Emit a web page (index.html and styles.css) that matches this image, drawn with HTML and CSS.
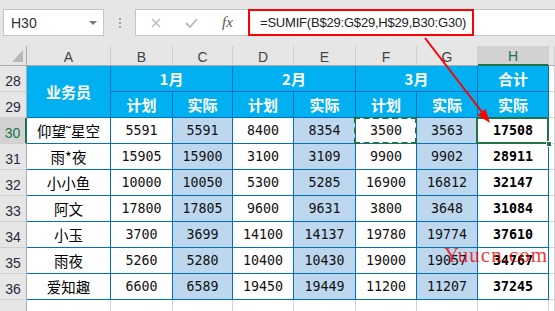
FILE: index.html
```html
<!DOCTYPE html>
<html lang="zh">
<head>
<meta charset="utf-8">
<title>SUMIF</title>
<link rel="stylesheet" href="styles.css">
</head>
<body>
<div class="app">
  <div class="toolbar">
    <div class="namebox"><span>H30</span><span class="caret"></span></div>
    <div class="grip"><i></i><i></i><i></i></div>
    <div class="fxbtns">
      <svg class="ic-x" width="10" height="10" viewBox="0 0 10 10"><path d="M1 1L9 9M9 1L1 9" stroke="#B9B9B9" stroke-width="1.4" fill="none"/></svg>
      <svg class="ic-ok" width="13" height="10" viewBox="0 0 13 10"><path d="M1 5L5 9L12 1" stroke="#B9B9B9" stroke-width="1.8" fill="none"/></svg>
      <span class="fx">fx</span>
    </div>
    <div class="formula">
      <div class="fbox">=SUMIF(B$29:G$29,H$29,B30:G30)</div>
      <div class="frest"></div>
    </div>
  </div>

  <div class="sheet">
    <div class="corner"><svg width="11" height="12" viewBox="0 0 11 12"><polygon points="11,0 11,12 0,12" fill="#B8B8B8"/></svg></div>
    <div class="ch">A</div><div class="ch">B</div><div class="ch">C</div><div class="ch">D</div>
    <div class="ch">E</div><div class="ch">F</div><div class="ch">G</div><div class="ch active">H</div><div class="ch"></div>

    <div class="rh">28</div>
    <div class="c h span2r">业务员</div>
    <div class="c h span2c">1月</div>
    <div class="c h span2c">2月</div>
    <div class="c h span2c">3月</div>
    <div class="c h">合计</div>
    <div class="g"></div>

    <div class="rh">29</div>
    <div class="c h">计划</div><div class="c h">实际</div>
    <div class="c h">计划</div><div class="c h">实际</div>
    <div class="c h">计划</div><div class="c h">实际</div>
    <div class="c h">实际</div>
    <div class="g"></div>

    <div class="rh active">30</div>
    <div class="c name">仰望˜星空</div>
    <div class="c n">5591</div><div class="c n s">5591</div>
    <div class="c n">8400</div><div class="c n s">8354</div>
    <div class="c n ants">3500</div><div class="c n s">3563</div>
    <div class="c n t sel">17508<span class="handle"></span></div>
    <div class="g"></div>

    <div class="rh">31</div>
    <div class="c name">雨*夜</div>
    <div class="c n">15905</div><div class="c n s">15900</div>
    <div class="c n">3100</div><div class="c n s">3109</div>
    <div class="c n">9900</div><div class="c n s">9902</div>
    <div class="c n t">28911</div>
    <div class="g"></div>

    <div class="rh">32</div>
    <div class="c name">小小鱼</div>
    <div class="c n">10000</div><div class="c n s">10050</div>
    <div class="c n">5300</div><div class="c n s">5285</div>
    <div class="c n">16900</div><div class="c n s">16812</div>
    <div class="c n t">32147</div>
    <div class="g"></div>

    <div class="rh">33</div>
    <div class="c name">阿文</div>
    <div class="c n">17800</div><div class="c n s">17805</div>
    <div class="c n">9600</div><div class="c n s">9631</div>
    <div class="c n">3800</div><div class="c n s">3648</div>
    <div class="c n t">31084</div>
    <div class="g"></div>

    <div class="rh">34</div>
    <div class="c name">小玉</div>
    <div class="c n">3700</div><div class="c n s">3699</div>
    <div class="c n">14100</div><div class="c n s">14137</div>
    <div class="c n">19780</div><div class="c n s">19774</div>
    <div class="c n t">37610</div>
    <div class="g"></div>

    <div class="rh">35</div>
    <div class="c name">雨夜</div>
    <div class="c n">5260</div><div class="c n s">5280</div>
    <div class="c n">10400</div><div class="c n s">10430</div>
    <div class="c n">19000</div><div class="c n s">19057</div>
    <div class="c n t">34767</div>
    <div class="g"></div>

    <div class="rh">36</div>
    <div class="c name">爱知趣</div>
    <div class="c n">6600</div><div class="c n s">6589</div>
    <div class="c n">19450</div><div class="c n s">19449</div>
    <div class="c n">11200</div><div class="c n s">11207</div>
    <div class="c n t">37245</div>
    <div class="g"></div>

    <div class="rh"></div>
    <div class="g"></div><div class="g"></div><div class="g"></div><div class="g"></div>
    <div class="g"></div><div class="g"></div><div class="g"></div><div class="g"></div><div class="g"></div>
  </div>

  <svg class="arrow" width="555" height="311" viewBox="0 0 555 311">
    <line x1="425" y1="38" x2="482" y2="112" stroke="#FF0000" stroke-width="2"/>
    <polygon points="490,123 477.5,114.9 485.5,108.9" fill="#FF0000"/>
  </svg>
  <div class="watermark">Yuucn.com</div>
</div>
</body>
</html>
```

FILE: styles.css
```css
* { box-sizing: border-box; }
html, body { margin: 0; padding: 0; }
body {
  width: 555px;
  height: 311px;
  overflow: hidden;
  background: #ffffff;
  font-family: "Liberation Sans", Arial, sans-serif;
}
.app {
  position: relative;
  width: 555px;
  height: 311px;
  overflow: hidden;
}

/* formula toolbar */
.toolbar {
  display: flex;
  align-items: flex-start;
  height: 46px;
  padding: 9px 0 0 3px;
  background: #E6E6E6;
}
.namebox {
  width: 101px;
  height: 27px;
  border: 1px solid #C6C6C6;
  background: #ffffff;
  display: flex;
  align-items: center;
  justify-content: space-between;
  padding: 0 6px 0 7px;
  font-size: 14px;
  color: #333333;
}
.caret {
  width: 0;
  height: 0;
  border-left: 4px solid transparent;
  border-right: 4px solid transparent;
  border-top: 4px solid #7A7A7A;
}
.grip {
  width: 31px;
  height: 27px;
  display: flex;
  flex-direction: column;
  align-items: center;
  justify-content: center;
  gap: 2px;
}
.grip i {
  display: block;
  width: 2px;
  height: 2px;
  background: #A0A0A0;
}
.fxbtns {
  width: 113px;
  height: 27px;
  border: 1px solid #C6C6C6;
  border-right: none;
  background: #ffffff;
  display: flex;
  align-items: center;
  padding-left: 15px;
}
.ic-ok { margin-left: 24px; }
.fx {
  margin-left: 24px;
  font-family: "Liberation Serif", serif;
  font-style: italic;
  font-size: 15px;
  color: #555555;
}
.formula {
  flex: 1;
  display: flex;
  height: 27px;
}
.fbox {
  width: 226px;
  height: 27px;
  border: 2px solid #FF0000;
  background: #ffffff;
  padding-left: 10px;
  display: flex;
  align-items: center;
  font-size: 13px;
  letter-spacing: -0.2px;
  color: #222222;
}
.frest {
  flex: 1;
  height: 27px;
  background: #ffffff;
  border-top: 1px solid #C6C6C6;
  border-bottom: 1px solid #C6C6C6;
}

/* sheet grid */
.sheet {
  display: grid;
  grid-template-columns: 27px 84px 62px 60px 61px 62px 61px 61px 71px 1fr;
  grid-template-rows: 20px repeat(10, 26px);
}
.corner {
  background: #E6E6E6;
  border-right: 1px solid #ABABAB;
  border-bottom: 1px solid #ABABAB;
  display: flex;
  align-items: flex-end;
  justify-content: flex-end;
  padding: 0 3px 3px 0;
}
.ch {
  background: #E6E6E6;
  border-right: 1px solid #CFCFCF;
  border-bottom: 1px solid #ABABAB;
  display: flex;
  align-items: center;
  justify-content: center;
  font-size: 14px;
  color: #444444;
  padding-top: 2px;
}
.ch.active {
  background: #D2D2D2;
  color: #217346;
  border-bottom: 2px solid #217346;
}
.rh {
  background: #E6E6E6;
  border-right: 1px solid #ABABAB;
  border-bottom: 1px solid #D0D0D0;
  display: flex;
  align-items: flex-end;
  justify-content: center;
  padding-bottom: 2px;
  font-size: 14px;
  color: #2A2A3A;
}
.rh.active {
  background: #D2D2D2;
  color: #217346;
  border-right: 2px solid #217346;
}

.c {
  border-right: 1px solid #0070C0;
  border-bottom: 1px solid #0070C0;
  display: flex;
  align-items: center;
  justify-content: center;
  color: #000000;
  background: #ffffff;
}
.g {
  border-right: 1px solid #D4D4D4;
  border-bottom: 1px solid #D4D4D4;
  background: #ffffff;
}
.h {
  background: #00B0F0;
  color: #ffffff;
  font-family: "Noto Sans CJK SC", sans-serif;
  font-weight: bold;
  font-size: 15px;
}
.span2r { grid-row: span 2; }
.span2c { grid-column: span 2; }
.name {
  font-family: "Noto Sans CJK SC", sans-serif;
  font-size: 14.5px;
}
.n {
  font-family: "DejaVu Sans Mono", monospace;
  font-size: 13.3px;
  color: #111111;
}
.s { background: #BDD7EE; }
.t { font-weight: bold; color: #000000; }

.ants { position: relative; }
.ants::after {
  content: "";
  position: absolute;
  top: -1px;
  left: -2px;
  right: -1px;
  bottom: -1px;
  border: 2px dashed #217346;
}
.sel { position: relative; }
.sel::after {
  content: "";
  position: absolute;
  top: -1px;
  left: -2px;
  right: -1px;
  bottom: -1px;
  border: 2px solid #217346;
}
.handle {
  position: absolute;
  right: -4px;
  bottom: -4px;
  width: 6px;
  height: 6px;
  background: #217346;
  border: 1px solid #ffffff;
  z-index: 2;
}

/* overlays */
.arrow {
  position: absolute;
  left: 0;
  top: 0;
  pointer-events: none;
}
.watermark {
  position: absolute;
  left: 444px;
  top: 243px;
  font-family: "Liberation Serif", serif;
  font-size: 21px;
  color: rgba(240, 0, 0, 0.8);
  letter-spacing: 1px;
  pointer-events: none;
}
```
